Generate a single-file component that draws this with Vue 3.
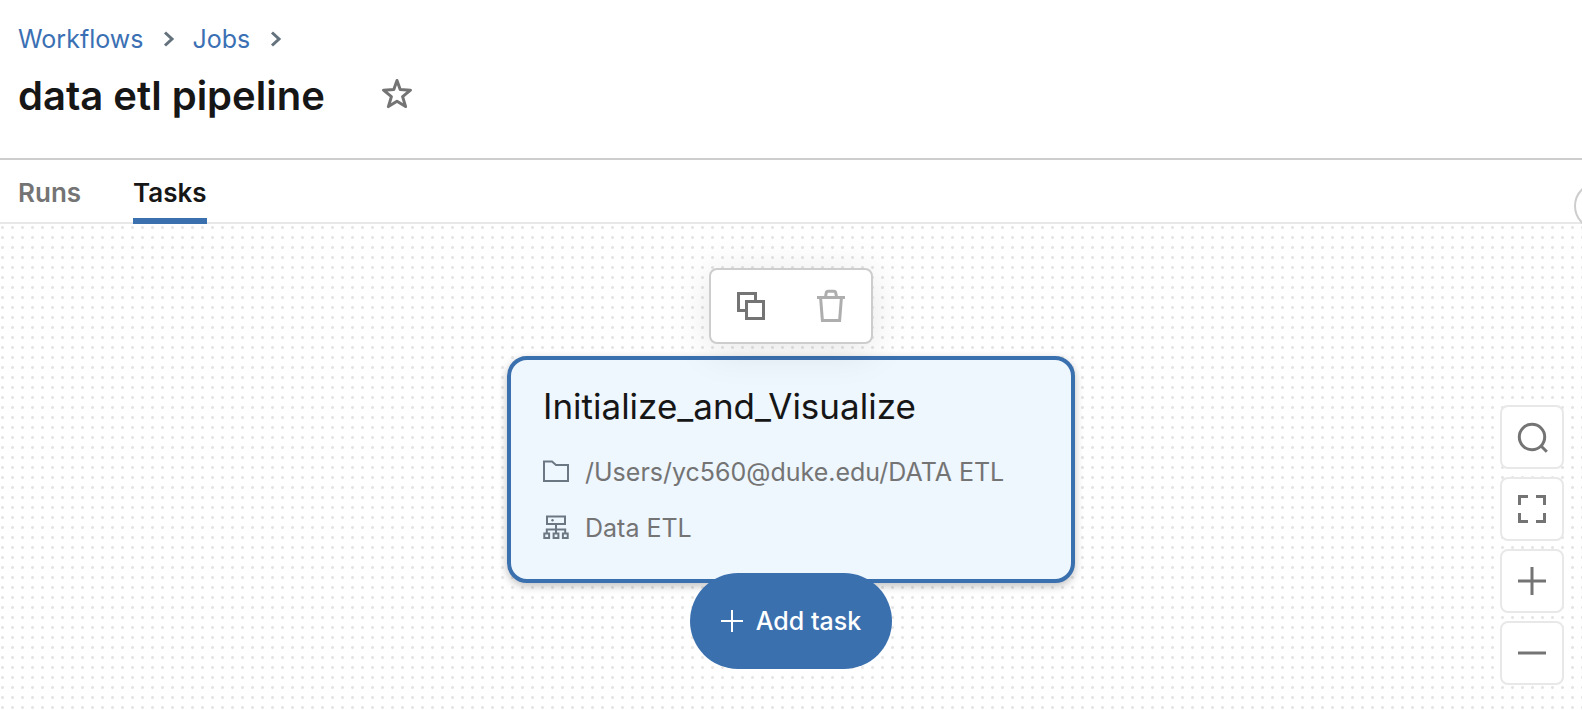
<script setup>
import { ref } from 'vue'

const activeTab = ref('Tasks')
const tabs = ['Runs', 'Tasks']
const crumbs = ['Workflows', 'Jobs']
</script>

<template>
  <div class="page">
    <header class="header">
      <nav class="crumbs" aria-label="Breadcrumb">
        <template v-for="crumb in crumbs" :key="crumb">
          <a href="#">{{ crumb }}</a>
          <svg class="chevron" viewBox="0 0 12 18" aria-hidden="true">
            <path d="M2 2.5 L9 9 L2 15.5" />
          </svg>
        </template>
      </nav>
      <div class="title-row">
        <h1>data etl pipeline</h1>
        <button class="star" aria-label="Add to favorites">
          <svg viewBox="0 0 32 32" aria-hidden="true">
            <path d="M16 2.5 L19.2 11.6 L29.5 12.2 L21.6 18.6 L24.6 28.6 L16 23.2 L7.4 28.6 L10.4 18.6 L2.5 12.2 L12.8 11.6 Z" />
          </svg>
        </button>
      </div>
    </header>

    <nav class="tabs" aria-label="Job views">
      <button
        v-for="tab in tabs"
        :key="tab"
        class="tab"
        :class="{ active: tab === activeTab }"
        @click="activeTab = tab"
      >{{ tab }}</button>
      <button class="round" aria-label="More"></button>
    </nav>

    <main class="canvas">
      <div class="toolbar">
        <button class="tool" aria-label="Clone task">
          <svg viewBox="0 0 32 32" aria-hidden="true">
            <path d="M10 20.5 H3.5 V3.5 H20.5 V10" />
            <rect x="11.5" y="11.5" width="17" height="17" />
          </svg>
        </button>
        <button class="tool muted" aria-label="Delete task">
          <svg viewBox="0 0 32 32" aria-hidden="true">
            <path d="M2 7.5 H30 M10.5 7 L11.2 3 Q11.5 1.3 13.2 1.3 H18.8 Q20.5 1.3 20.8 3 L21.5 7 M5.6 8 L7.4 30.6 H24.6 L26.4 8" />
          </svg>
        </button>
      </div>

      <section class="node">
        <h2>Initialize_and_Visualize</h2>
        <p class="meta">
          <svg viewBox="0 0 26 26" aria-hidden="true">
            <path class="folder" d="M1 2.5 H9 L13 6 H25 V22 H1 Z" />
          </svg>
          <span>/Users/yc560@duke.edu/DATA ETL</span>
        </p>
        <p class="meta">
          <svg viewBox="0 0 26 26" aria-hidden="true">
            <path class="cluster" d="M4 1.5 H22 V9 H4 Z M13 9 V18.5 M3.8 18.5 V14.5 H22.2 V18.5 M1.3 18.5 H6.1 V23 H1.3 Z M10.6 18.5 H15.4 V23 H10.6 Z M19.9 18.5 H24.7 V23 H19.9 Z" />
            <circle class="dot" cx="9.5" cy="5.3" r="1.2" />
          </svg>
          <span>Data ETL</span>
        </p>
      </section>

      <button class="add">
        <svg viewBox="0 0 22 22" aria-hidden="true"><path d="M11 0 V22 M0 11 H22" /></svg>
        <span>Add task</span>
      </button>

      <div class="controls">
        <button aria-label="Reset zoom">
          <svg viewBox="0 0 32 32" aria-hidden="true">
            <circle cx="16" cy="16" r="12.7" />
            <path d="M24.8 24.8 L30.8 30.8" />
          </svg>
        </button>
        <button aria-label="Fit to screen">
          <svg viewBox="0 0 32 32" aria-hidden="true">
            <path d="M3.5 12 V3.5 H12 M20 3.5 H28.5 V12 M28.5 20 V28.5 H20 M12 28.5 H3.5 V20" />
          </svg>
        </button>
        <button aria-label="Zoom in">
          <svg viewBox="0 0 32 32" aria-hidden="true"><path d="M16 2 V30 M2 16 H30" /></svg>
        </button>
        <button aria-label="Zoom out">
          <svg viewBox="0 0 32 32" aria-hidden="true"><path d="M2 16 H30" /></svg>
        </button>
      </div>
    </main>
  </div>
</template>

<style>
body {
  margin: 0;
  background: #fff;
}
</style>

<style scoped>
.page {
  display: flex;
  flex-direction: column;
  min-height: 100vh;
  font-family: Inter, "Liberation Sans", sans-serif;
  font-size: 25px;
  line-height: 32px;
  color: #161616;
}

button {
  margin: 0;
  padding: 0;
  border: none;
  background: none;
  font: inherit;
  color: inherit;
  cursor: pointer;
}

svg {
  display: block;
  flex: none;
  fill: none;
  stroke: currentColor;
  overflow: visible;
}

h1,
h2,
p {
  margin: 0;
}

.header {
  padding: 23px 18px 36px;
  border-bottom: 2px solid #cdcdcd;
}

.crumbs {
  display: flex;
  align-items: center;
}

.crumbs a {
  color: #3b70b4;
  text-decoration: none;
}

.chevron {
  width: 12px;
  height: 18px;
  margin: 0 17px 0 20px;
  stroke-width: 3;
  color: #64727d;
}

.title-row {
  display: flex;
  align-items: flex-start;
  gap: 56px;
  margin-top: 15px;
}

h1 {
  font-size: 40px;
  line-height: 52px;
  font-weight: 600;
}

.star {
  padding-top: 8px;
  color: #747474;
}

.star svg {
  width: 32px;
  height: 32px;
  stroke-width: 3;
  stroke-linejoin: round;
}

.tabs {
  position: relative;
  display: flex;
  gap: 52px;
  padding: 0 18px;
  overflow: hidden;
  box-shadow: inset 0 -2px #e8e8e8;
}

.tab {
  padding: 17px 0 9px;
  border-bottom: 6px solid transparent;
  font-size: 26px;
  font-weight: 600;
  color: #747474;
}

.tab.active {
  color: #161616;
  border-color: #3b70af;
}

.round {
  position: absolute;
  top: 22px;
  right: -40px;
  box-sizing: border-box;
  width: 48px;
  height: 48px;
  border: 2px solid #cdcdcd;
  border-radius: 24px;
  background: #fff;
}

.canvas {
  position: relative;
  flex: 1;
  display: flex;
  flex-direction: column;
  align-items: center;
  padding: 44px 18px 40px;
  background: radial-gradient(circle at 25% 35%, #e4e4e4 1px, transparent 2px) 0 0 / 10px 10px;
}

.toolbar {
  position: relative;
  z-index: 1;
  display: flex;
  border: 2px solid #cdcdcd;
  border-radius: 8px;
  background: #fff;
  box-shadow: 0 6px 40px rgba(0, 0, 0, 0.1);
}

.tool {
  display: grid;
  place-items: center;
  width: 80px;
  height: 72px;
  color: #747474;
}

.tool.muted {
  color: #aeaeae;
}

.tool svg {
  width: 32px;
  height: 32px;
  stroke-width: 3;
}

.node {
  box-sizing: border-box;
  width: 568px;
  margin-top: 12px;
  padding: 22px 32px 35px;
  border: 4px solid #3b70af;
  border-radius: 20px;
  background: #eef6fe;
  box-shadow: 0 3px 8px rgba(0, 0, 0, 0.25);
}

h2 {
  margin-bottom: 26px;
  font-size: 35px;
  line-height: 48px;
  font-weight: 400;
}

.meta {
  display: flex;
  align-items: center;
  gap: 16px;
  color: #747474;
}

.meta + .meta {
  margin-top: 24px;
}

.meta svg {
  width: 26px;
  height: 26px;
  stroke-width: 2;
  color: #6b7883;
}

.meta .dot {
  fill: currentColor;
  stroke: none;
}

.add {
  z-index: 2;
  display: flex;
  align-items: center;
  gap: 13px;
  margin-top: -10px;
  padding: 32px 31px;
  border-radius: 48px;
  background: #3b70af;
  color: #fff;
  font-weight: 500;
}

.add svg {
  width: 22px;
  height: 22px;
  stroke-width: 2;
}

.controls {
  position: absolute;
  right: 18px;
  bottom: 25px;
  display: flex;
  flex-direction: column;
  gap: 8px;
}

.controls button {
  box-sizing: border-box;
  display: grid;
  place-items: center;
  width: 64px;
  height: 64px;
  border: 2px solid #e8e8e8;
  border-radius: 8px;
  background: #fff;
  color: #747474;
}

.controls svg {
  width: 32px;
  height: 32px;
  stroke-width: 3;
}
</style>
